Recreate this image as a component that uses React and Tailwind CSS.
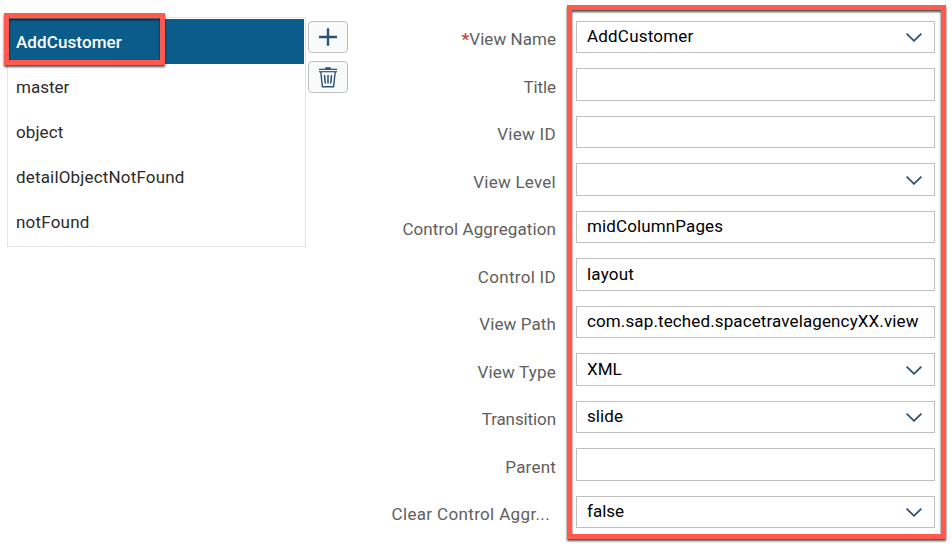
const views = [
  { name: 'AddCustomer', selected: true, tracking: 'tracking-[0.1px]' },
  { name: 'master', tracking: 'tracking-normal' },
  { name: 'object', tracking: 'tracking-[0.1px]' },
  { name: 'detailObjectNotFound', tracking: 'tracking-[0.17px]' },
  { name: 'notFound', tracking: 'tracking-[0.2px]' },
];

const fields = [
  { label: 'View Name', labelTracking: 'tracking-[0.05px]', required: true, value: 'AddCustomer', tracking: 'tracking-[0.2px]', select: true },
  { label: 'Title', labelTracking: 'tracking-[-0.1px]', value: '' },
  { label: 'View ID', labelTracking: 'tracking-[0.3px]', value: '' },
  { label: 'View Level', labelTracking: 'tracking-[0.25px]', value: '', select: true },
  { label: 'Control Aggregation', labelTracking: 'tracking-[0.1px]', value: 'midColumnPages', tracking: 'tracking-[0.12px]' },
  { label: 'Control ID', labelTracking: 'tracking-[0.3px]', value: 'layout', tracking: 'tracking-[0.2px]' },
  { label: 'View Path', labelTracking: 'tracking-[0.1px]', value: 'com.sap.teched.spacetravelagencyXX.view', tracking: 'tracking-[0.12px]' },
  { label: 'View Type', labelTracking: 'tracking-[0.2px]', value: 'XML', tracking: 'tracking-normal', select: true },
  { label: 'Transition', labelTracking: 'tracking-[-0.1px]', value: 'slide', tracking: 'tracking-[0.1px]', select: true },
  { label: 'Parent', labelTracking: 'tracking-[0.2px]', value: '' },
  { label: 'Clear Control Aggr...', labelTracking: 'tracking-[0.35px]', value: 'false', tracking: 'tracking-normal', select: true },
];

function PlusIcon() {
  return (
    <svg width="18" height="18" viewBox="0 0 18 18" fill="none" stroke="#2b5275" strokeWidth="2.4">
      <path d="M9 0.3V17.7M0 9H18" />
    </svg>
  );
}

function TrashIcon() {
  return (
    <svg width="18" height="21" viewBox="0 0 18 21" fill="none" stroke="#2b5275" strokeWidth="1.4">
      <path d="M0 2.3H18" strokeWidth="1.3" />
      <path d="M6.3 1.1H11.7" strokeWidth="1.8" />
      <path d="M0 4.7H18" strokeWidth="1.2" />
      <path d="M1.8 5L3.4 19.8H14.6L16.2 5" />
      <path d="M5.5 8L6.3 16.5M9 8V16.5M12.5 8L11.7 16.5" strokeWidth="1.5" />
    </svg>
  );
}

function ChevronIcon() {
  return (
    <svg className="mt-px" width="16" height="9" viewBox="0 0 16 9" fill="none" stroke="#2b5275" strokeWidth="1.8">
      <path d="M0.6 0.7L8 7.8L15.4 0.7" />
    </svg>
  );
}

function ToolButton({ children }) {
  return (
    <button className="flex h-8 w-10 items-center justify-center rounded-[4px] border border-[#bfbfbf] bg-[#f9fbfb]">
      {children}
    </button>
  );
}

export default function App() {
  return (
    <div className="relative flex h-[546px] w-[952px] overflow-hidden bg-white font-['Roboto',sans-serif] text-[17px] leading-[20px]">
      <div className="ml-[7px] mt-[17px] h-[230px] w-[299px] shrink-0 border border-[#e3e3e0] pr-px pt-px">
        <ul>
          {views.map((v) => (
            <li
              key={v.name}
              className={`flex h-[45px] items-center pl-2 ${v.tracking} ${
                v.selected ? 'bg-[#0b5c8b] font-medium text-white' : 'text-[#2b2b2b]'
              }`}
            >
              {v.name}
            </li>
          ))}
        </ul>
      </div>

      <div className="ml-[2px] mt-[21px] flex shrink-0 flex-col gap-2">
        <ToolButton><PlusIcon /></ToolButton>
        <ToolButton><TrashIcon /></ToolButton>
      </div>

      <form className="ml-[28px] mt-[21px] flex flex-col gap-[15px]">
        {fields.map((f) => (
          <div key={f.label} className="flex h-8 even:h-[33px]">
            <label className={`flex w-[180px] items-center justify-end whitespace-nowrap pt-[4px] text-[#606060] ${f.labelTracking}`}>
              {f.required && <span className="font-bold text-[#c14646]">*</span>}
              <span className={f.label.endsWith('...') ? 'pr-[6px]' : ''}>{f.label}</span>
            </label>
            <div className="ml-5 flex w-[359px] items-center justify-between border border-[#bfbfbf] bg-white pl-[10px] pr-[12px] text-black">
              <span className={`-mt-[2px] ${f.tracking ?? ''}`}>{f.value}</span>
              {f.select && <ChevronIcon />}
            </div>
          </div>
        ))}
      </form>

      <div className="absolute left-[4px] top-[13px] h-[52px] w-[161px] border-[5px] border-[#ff5a4d] drop-shadow-[0_2px_1px_rgba(0,0,0,0.7)]" />
      <div className="absolute left-[567px] top-[5px] h-[534px] w-[379px] border-[5px] border-[#ff5a4d] drop-shadow-[0_2px_1px_rgba(0,0,0,0.7)]" />
    </div>
  );
}
